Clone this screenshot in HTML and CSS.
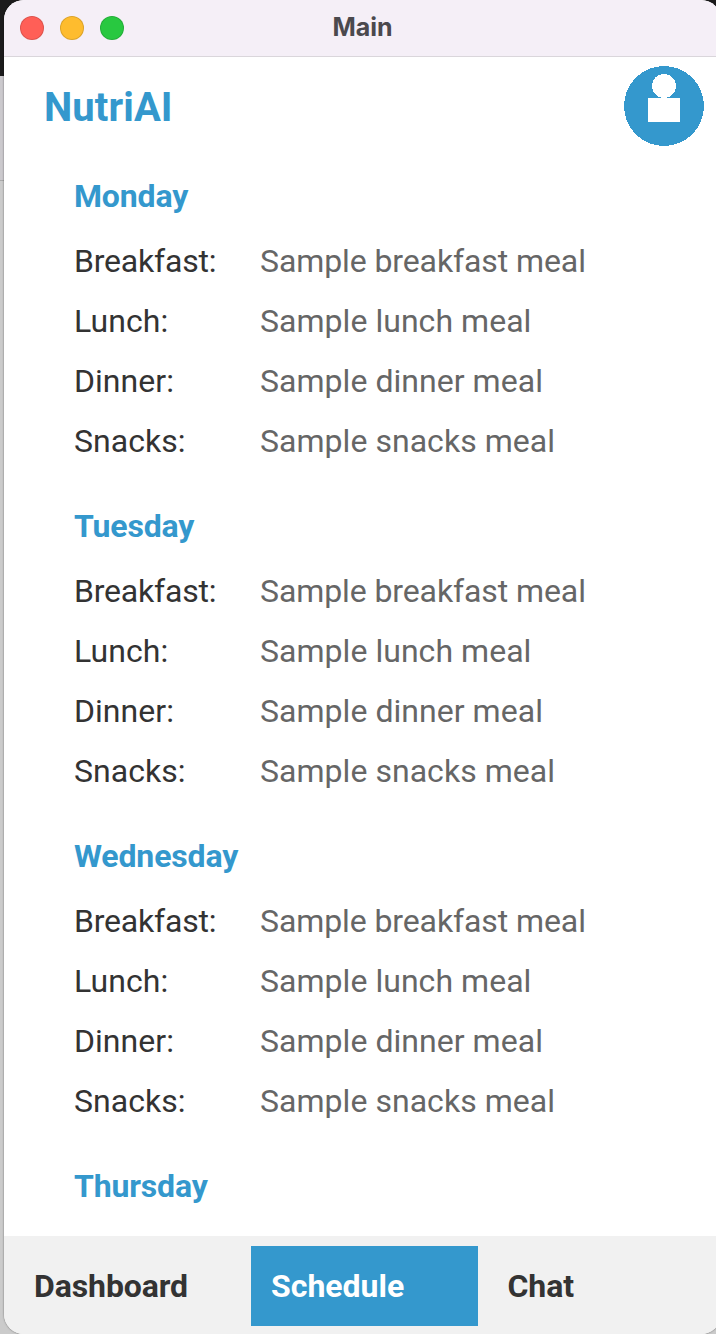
FILE: index.html
```html
<!DOCTYPE html>
<html lang="en">
<head>
<meta charset="utf-8">
<title>Main</title>
<link rel="stylesheet" href="styles.css">
</head>
<body>
<div class="window">
  <header class="titlebar">
    <div class="lights"><span class="light close"></span><span class="light minimize"></span><span class="light expand"></span></div>
    <span class="window-title">Main</span>
  </header>
  <div class="appbar">
    <h1 class="brand">NutriAI</h1>
    <svg class="avatar" viewBox="0 0 80 80" shape-rendering="crispEdges"><circle cx="40" cy="40" r="40" fill="#3498cd"/><circle cx="40" cy="20" r="12" fill="#fff"/><path d="M24 32h32v24H24z" fill="#fff"/></svg>
  </div>
  <main class="schedule">
    <section class="day">
      <h2 class="day-name">Monday</h2>
      <dl class="meals"><dt class="first">Breakfast:</dt><dd class="first">Sample breakfast meal</dd><dt>Lunch:</dt><dd>Sample lunch meal</dd><dt>Dinner:</dt><dd>Sample dinner meal</dd><dt>Snacks:</dt><dd>Sample snacks meal</dd></dl>
    </section>
    <section class="day">
      <h2 class="day-name">Tuesday</h2>
      <dl class="meals"><dt class="first">Breakfast:</dt><dd class="first">Sample breakfast meal</dd><dt>Lunch:</dt><dd>Sample lunch meal</dd><dt>Dinner:</dt><dd>Sample dinner meal</dd><dt>Snacks:</dt><dd>Sample snacks meal</dd></dl>
    </section>
    <section class="day">
      <h2 class="day-name">Wednesday</h2>
      <dl class="meals"><dt class="first">Breakfast:</dt><dd class="first">Sample breakfast meal</dd><dt>Lunch:</dt><dd>Sample lunch meal</dd><dt>Dinner:</dt><dd>Sample dinner meal</dd><dt>Snacks:</dt><dd>Sample snacks meal</dd></dl>
    </section>
    <section class="day">
      <h2 class="day-name">Thursday</h2>
    </section>
  </main>
  <nav class="tabs">
    <a class="tab">Dashboard</a>
    <a class="tab active">Schedule</a>
    <a class="tab">Chat</a>
  </nav>
</div>
</body>
</html>
```
FILE: styles.css
```css
* { box-sizing: border-box; margin: 0; padding: 0; }
html { overflow: hidden; }
body { height: 1334px; padding-left: 4px; overflow: hidden; font-family: Roboto, sans-serif; background: linear-gradient(#1c1b1c 0 76px, #cbc9cd 76px 180px, #aaa 180px 181px, #cbcbcb 181px); }
.window { width: 717px; height: 1334px; display: flex; flex-direction: column; background: #fff; border-radius: 20px; overflow: hidden; box-shadow: 0 0 2px #0008; }
.titlebar { height: 57px; flex: none; display: grid; grid-template-columns: 1fr auto 1fr; align-items: center; padding: 0 16px; background: #f5eff7; border-bottom: 1px solid #dad6db; }
.lights { display: flex; gap: 16px; }
.light { width: 24px; height: 24px; border-radius: 50%; border: 1px solid #0002; }
.close { background: #ff5f57; }
.minimize { background: #febc2e; }
.expand { background: #28c840; }
.window-title { padding-bottom: 3px; font: 700 25px Inter, sans-serif; color: #4b494d; }
.appbar { height: 109px; flex: none; display: flex; justify-content: space-between; padding: 9px 17px 0 40px; }
.brand { padding-top: 1px; font-size: 40px; line-height: 82px; font-weight: 700; letter-spacing: 0.1px; color: #3498cd; }
.avatar { width: 80px; height: 80px; }
.schedule { flex: 1; min-height: 0; overflow: hidden; padding-left: 70px; }
.day { height: 330px; }
.day-name { font-size: 32px; line-height: 60px; height: 65px; font-weight: 700; letter-spacing: -0.15px; color: #3498cd; }
.meals { display: grid; grid-template-columns: 186px 1fr; grid-auto-rows: 60px; font-size: 32px; line-height: 60px; letter-spacing: 0.04px; color: #333; }
.meals dd { color: #666; }
.meals dt.first { letter-spacing: -0.2px; }
.meals dd.first { letter-spacing: -0.1px; }
.tabs { flex: none; height: 98px; display: grid; grid-template-columns: 226.5px 227px 1fr; column-gap: 10px; padding: 10px 10px 8px; background: #f1f1f1; }
.tab { padding-left: 20px; font-size: 32px; line-height: 80px; font-weight: 700; letter-spacing: -0.1px; color: #333; }
.active { padding-left: 20.5px; letter-spacing: 0; background: #3498cd; color: #fff; }
```
